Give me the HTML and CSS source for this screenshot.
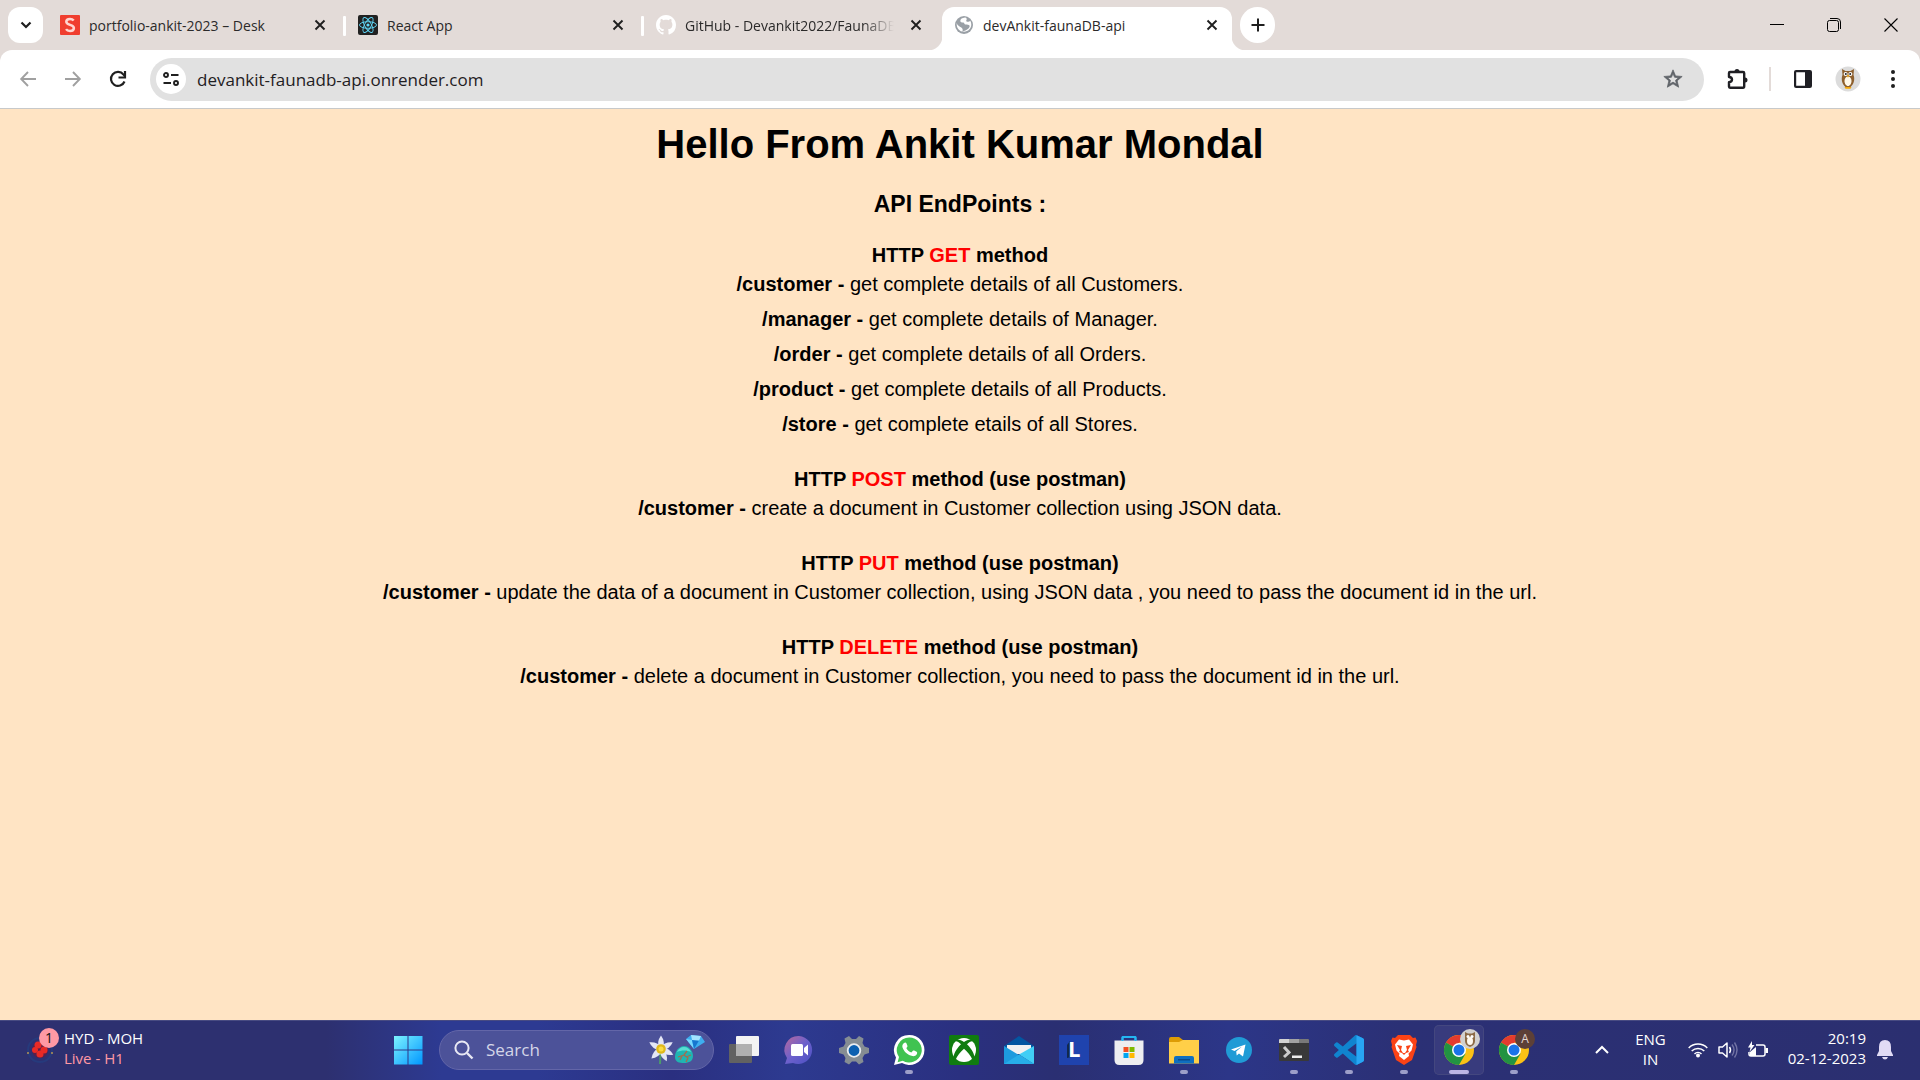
FILE: index.html
```html
<!DOCTYPE html>
<html lang="en">
<head>
<meta charset="utf-8">
<title>devAnkit-faunaDB-api</title>
<link rel="stylesheet" href="styles.css">
</head>
<body>
<header class="tabstrip">
  <button class="tab-search" aria-label="Search tabs"><svg width="12" height="12" viewBox="0 0 12 12"><path d="M1.500 3.500 6 8l4.500-4.500" fill="none" stroke="#1f1f1f" stroke-width="2.200"/></svg></button>
  <div class="tab divided">
    <svg class="favicon" viewBox="0 0 20 20"><rect width="20" height="20" rx="1" fill="#f03e2f"/><path d="M13.700 5.500C12.700 4.300 11.400 4 10 4 7.800 4 6.300 5 6.300 6.800c0 3.800 7.600 2.400 7.600 6.200 0 1.900-1.700 3-3.900 3-1.700 0-3.100-.6-4-1.900" fill="none" stroke="#ffd5d0" stroke-width="2.500"/></svg>
    <span class="tab-title">portfolio-ankit-2023 – Desk</span>
    <button class="tab-close" aria-label="Close tab"><svg width="12" height="12" viewBox="0 0 12 12"><path d="m1.500 1.500 9 9m0-9-9 9" stroke="#1f1f1f" stroke-width="1.900"/></svg></button>
  </div>
  <div class="tab divided">
    <svg class="favicon" viewBox="0 0 20 20"><rect width="20" height="20" rx="2" fill="#212121"/><g fill="none" stroke="#61dafb" stroke-width=".9"><ellipse cx="10" cy="10" rx="8.500" ry="3.300"/><ellipse cx="10" cy="10" rx="8.500" ry="3.300" transform="rotate(60 10 10)"/><ellipse cx="10" cy="10" rx="8.500" ry="3.300" transform="rotate(120 10 10)"/></g><circle cx="10" cy="10" r="1.600" fill="#61dafb"/></svg>
    <span class="tab-title">React App</span>
    <button class="tab-close" aria-label="Close tab"><svg width="12" height="12" viewBox="0 0 12 12"><path d="m1.500 1.500 9 9m0-9-9 9" stroke="#1f1f1f" stroke-width="1.900"/></svg></button>
  </div>
  <div class="tab">
    <svg class="favicon" viewBox="0 0 16 16"><path fill="#fff" d="M8 0C3.580 0 0 3.580 0 8c0 3.540 2.290 6.530 5.470 7.590.4.070.55-.17.55-.38 0-.19-.01-.82-.01-1.490-2.010.37-2.530-.49-2.690-.94-.09-.23-.48-.94-.82-1.130-.28-.15-.68-.52-.01-.53.63-.01 1.080.58 1.230.82.72 1.210 1.870.87 2.330.66.070-.52.28-.87.51-1.070-1.780-.2-3.640-.89-3.640-3.950 0-.87.31-1.590.82-2.150-.08-.2-.36-1.020.08-2.120 0 0 .67-.21 2.200.82.64-.18 1.320-.27 2-.27s1.360.09 2 .27c1.530-1.040 2.200-.82 2.200-.82.44 1.100.16 1.920.08 2.120.51.56.82 1.270.82 2.150 0 3.070-1.870 3.750-3.650 3.950.29.25.54.73.54 1.480 0 1.070-.01 1.930-.01 2.200 0 .21.15.46.55.38A8.010 8.010 0 0 0 16 8c0-4.420-3.580-8-8-8z"/></svg>
    <span class="tab-title faded">GitHub - Devankit2022/FaunaDB</span>
    <button class="tab-close" aria-label="Close tab"><svg width="12" height="12" viewBox="0 0 12 12"><path d="m1.500 1.500 9 9m0-9-9 9" stroke="#1f1f1f" stroke-width="1.900"/></svg></button>
  </div>
  <div class="tab active">
    <svg class="favicon" viewBox="0 0 20 20"><circle cx="10" cy="10" r="9" fill="#9aa0a6"/><path d="M11 2.600c-3 .4-4.500 1.500-4.700 3.100 0 1.500 1.500 1.700 2.900 1.700 1.200 0 1 1.900 2.300 2 1.800.2 3.300 0 4 1 .5 1-.3 2.500-1.700 3.600-1.300 1-3.300 2.200-5.300 2.400.5-2.200 0-3-1.200-3.900-1.800-1.200-3.900-1.900-4.600-4.500-.5 5 2.800 8.800 7.300 8.800 4.200 0 7.300-3.300 7.300-7.200 0-1.400-.4-2.700-1-3.800-1 .9-2.700 1.500-3.700.7-1-.9.300-1.700.1-2.600-.1-.6-.7-.9-1.400-1.300z" fill="#fff"/></svg>
    <span class="tab-title">devAnkit-faunaDB-api</span>
    <button class="tab-close" aria-label="Close tab"><svg width="12" height="12" viewBox="0 0 12 12"><path d="m1.500 1.500 9 9m0-9-9 9" stroke="#1f1f1f" stroke-width="1.900"/></svg></button>
  </div>
  <button class="new-tab" aria-label="New tab"><svg width="14" height="14" viewBox="0 0 14 14"><path d="M7 .5v13M.5 7h13" stroke="#1f1f1f" stroke-width="2"/></svg></button>
  <div class="window-controls">
    <button aria-label="Minimize"><svg width="14" height="14" viewBox="0 0 14 14"><path d="M0 6.500h14" stroke="#000"/></svg></button>
    <button aria-label="Restore"><svg width="14" height="14" viewBox="0 0 14 14"><g fill="none" stroke="#000"><rect x=".5" y="2.500" width="11" height="11" rx="2"/><path d="M3 .5h7a3.500 3.500 0 0 1 3.500 3.500v7"/></g></svg></button>
    <button aria-label="Close"><svg width="14" height="14" viewBox="0 0 14 14"><path d="m.5.5 13 13m0-13-13 13" stroke="#000" stroke-width="1.100"/></svg></button>
  </div>
</header>

<div class="toolbar-back">
<nav class="toolbar">
  <button class="tool" aria-label="Back"><svg width="16" height="16" viewBox="0 0 16 16"><path d="M16 8H1.500M8 1 1.200 8 8 15" fill="none" stroke="#a0a0a0" stroke-width="1.900"/></svg></button>
  <button class="tool" aria-label="Forward"><svg width="16" height="16" viewBox="0 0 16 16"><path d="M0 8h14.500M8 1l6.800 7L8 15" fill="none" stroke="#a0a0a0" stroke-width="1.900"/></svg></button>
  <button class="tool" aria-label="Reload"><svg width="18" height="18" viewBox="0 0 18 18"><path d="M15.500 11.500A7 7 0 1 1 14.500 4.600L16 6.200" fill="none" stroke="#1f1f1f" stroke-width="2.200"/><path d="M16 1v6.500H9.500" fill="none" stroke="#1f1f1f" stroke-width="2.200"/></svg></button>
  <div class="omnibox">
    <button class="site-info" aria-label="Site information"><svg width="16" height="14" viewBox="0 0 16 14"><g fill="none" stroke="#1f1f1f" stroke-width="1.900"><circle cx="3" cy="3" r="2"/><path d="M8 3h7.500M.5 11H8"/><circle cx="13" cy="11" r="2"/></g></svg></button>
    <input class="url" type="text" aria-label="Address" value="devankit-faunadb-api.onrender.com">
    <button class="star" aria-label="Bookmark"><svg width="22" height="22" viewBox="0 0 24 24"><path fill="#5f6368" d="m22 9.240-7.190-.62L12 2 9.190 8.630 2 9.240l5.460 4.730L5.820 21 12 17.270 18.180 21l-1.630-7.030L22 9.240zM12 15.400l-3.760 2.270 1-4.280-3.320-2.880 4.380-.38L12 6.100l1.710 4.040 4.380.38-3.320 2.880 1 4.280L12 15.400z" stroke="#5f6368" stroke-width=".8"/></svg></button>
  </div>
  <div class="actions">
    <button class="tool" aria-label="Extensions"><svg width="22" height="22" viewBox="0 0 22 22"><path d="M4 4h12q1.200 0 1.200 1.200v13Q17.200 19.700 16 19.700H3Q2 19.700 2 18.500v-4.200q3-.3 3-2.700T2 9V5q0-1 1-1z" fill="none" stroke="#1f1f24" stroke-width="2.400" stroke-linejoin="round"/><path d="M7.500 3.500a2.500 2.500 0 0 1 5 0zM18 9.500a2.500 2.500 0 0 1 0 5z" fill="#1f1f24"/></svg></button>
    <span class="bar-divider"></span>
    <button class="tool" aria-label="Side panel"><svg width="18" height="18" viewBox="0 0 18 18"><rect x="1.100" y="1.100" width="15.800" height="15.800" rx="1" fill="none" stroke="#1f1f24" stroke-width="2.200"/><path d="M11 1h6v16h-6z" fill="#1f1f24"/></svg></button>
    <button class="tool" aria-label="Profile"><svg width="26" height="26" viewBox="0 0 26 26"><circle cx="13" cy="13" r="12.500" fill="#dcdcdc"/><path d="M7 3l3.500 2h5L19 3l-.5 6c2 5-.5 10-3 12h-5c-2.500-2-5-7-3-12z" fill="#8d5f2d"/><path d="M13 10.500c2 0 3.500 2 3.500 4.500s-1.500 5-3.500 5-3.500-2.500-3.500-5 1.500-4.500 3.500-4.500z" fill="#fff8e9"/><circle cx="10.600" cy="8" r="2" fill="#fff"/><circle cx="15.400" cy="8" r="2" fill="#fff"/><circle cx="10.800" cy="8" r="1" fill="#222"/><circle cx="15.200" cy="8" r="1" fill="#222"/><path d="m12 9 1 3 1-3zM9.500 21h7l-1 1.700h-5z" fill="#f5a90a"/></svg></button>
    <button class="tool" aria-label="Menu"><svg width="6" height="18" viewBox="0 0 6 18"><g fill="#1f1f1f"><circle cx="3" cy="2" r="2"/><circle cx="3" cy="9" r="2"/><circle cx="3" cy="16" r="2"/></g></svg></button>
  </div>
</nav>
</div>

<main class="page">
  <h1>Hello From Ankit Kumar Mondal</h1>
  <h2>API EndPoints :</h2>
  <section>
    <h3>HTTP <span class="verb">GET</span> method</h3>
    <p><b>/customer - </b>get complete details of all Customers.</p>
    <p><b>/manager - </b>get complete details of Manager.</p>
    <p><b>/order - </b>get complete details of all Orders.</p>
    <p><b>/product - </b>get complete details of all Products.</p>
    <p><b>/store - </b>get complete etails of all Stores.</p>
  </section>
  <section>
    <h3>HTTP <span class="verb">POST</span> method (use postman)</h3>
    <p><b>/customer - </b>create a document in Customer collection using JSON data.</p>
  </section>
  <section>
    <h3>HTTP <span class="verb">PUT</span> method (use postman)</h3>
    <p><b>/customer - </b>update the data of a document in Customer collection, using JSON data , you need to pass the document id in the url.</p>
  </section>
  <section>
    <h3>HTTP <span class="verb">DELETE</span> method (use postman)</h3>
    <p><b>/customer - </b>delete a document in Customer collection, you need to pass the document id in the url.</p>
  </section>
</main>

<footer class="taskbar">
  <button class="widget">
    <svg width="34" height="44" viewBox="0 0 34 44"><circle cx="14" cy="22" r="12" fill="none" stroke="#263a7c" stroke-width="2"/><circle cx="14" cy="22" r="8" fill="#59204a"/><g fill="#e82a26"><circle cx="12" cy="17" r="3.500"/><circle cx="18" cy="22" r="3.500"/><circle cx="9" cy="22" r="3"/><circle cx="14" cy="26" r="3.500"/></g><circle cx="2" cy="25" r="1" fill="#b59553"/><circle cx="26" cy="25" r="1" fill="#b59553"/><circle cx="23" cy="10" r="10" fill="#ff99a4"/><text x="23" y="15" text-anchor="middle" font-size="14" fill="#111">1</text></svg>
    <span class="score"><span>HYD - MOH</span><span class="live">Live - H1</span></span>
  </button>

  <div class="apps">
    <button class="app" aria-label="Start"><svg width="30" height="30" viewBox="0 0 30 30"><defs><linearGradient id="win" x1="0" y1="0" x2="1" y2="1" ><stop stop-color="#7df3ff"/><stop offset="1" stop-color="#0096ff"/></linearGradient></defs><path d="M1 1h13.500v13.500H1zM15.500 1H29.500v13.500H15.500zM1 15.500h13.500V29.500H1zM15.500 15.500H29.500V29.500H15.500z" fill="url(#win)"/></svg></button>
    <label class="search">
      <svg width="20" height="20" viewBox="0 0 20 20"><circle cx="8" cy="8" r="6.600" fill="none" stroke="#e8e8f4" stroke-width="2"/><path d="m13 13 5.500 5.500" stroke="#e8e8f4" stroke-width="2.400"/></svg>
      <input type="text" placeholder="Search" aria-label="Search">
      <svg width="58" height="32" viewBox="0 0 58 32"><path d="M12 17c1 5 0 9 0 13" stroke="#4c9a6b" stroke-width="2" fill="none"/><g fill="#e3e6f6"><path id="petal" d="M13 1.500q4.500 6 2 13.500h-4q-2.500-7.500 2-13.500z"/><use href="#petal" transform="rotate(60 13 15)"/><use href="#petal" transform="rotate(115 13 15)"/><use href="#petal" transform="rotate(155 13 15)"/><use href="#petal" transform="rotate(225 13 15)"/><use href="#petal" transform="rotate(300 13 15)"/></g><circle cx="13" cy="15" r="4.800" fill="#e0b81b"/><circle cx="13" cy="15" r="2.500" fill="#f9dc43"/><path d="M27 23c0-6 4-11 9-11s9 5 9 10-4 7-9 7-9-1-9-6z" fill="#20b5b2"/><path d="M29 18c1-3 4-5 7-5s6 2 7 5c-5-2-9-2-14 0z" fill="#58ddd3"/><path d="m30 23 6-2 3-4m-3 4 4 3-2 4m-4-6-2 4m6-3 5-2" stroke="#a66b4d" stroke-width="1.300" fill="none"/><path d="m38 5 5-4 10 1 4 6-11 7z" fill="#3eaef0"/><path d="m38 5 6 1 2 9z" fill="#78d8ff"/><path d="m44 6 7 .5L46 15z" fill="#1776cf"/><path d="m43 1 10 1-2 4.500L44 6z" fill="#a3e4ff"/></svg>
    </label>
    <button class="app" aria-label="Task view"><svg width="30" height="30" viewBox="0 0 30 30"><rect y="9" width="23" height="19" rx="1" fill="#626262"/><rect x="7" y="1" width="23" height="20" rx="1" fill="#f3f3f3"/><path d="M7 9h16v12H7z" fill="#b0b0b0"/></svg></button>
    <button class="app" aria-label="Chat"><svg width="30" height="30" viewBox="0 0 30 30"><defs><linearGradient id="chat" x1="0" y1="0" x2="1" y2="1"><stop stop-color="#b8689b"/><stop offset=".5" stop-color="#6d61cc"/><stop offset="1" stop-color="#4a4fc3"/></linearGradient></defs><path d="M15 1a14 14 0 1 1-6 27L1 29l2-6A14 14 0 0 1 15 1z" fill="url(#chat)"/><rect x="7" y="9" width="12" height="12" rx="1.500" fill="#fff"/><path d="m20 13 4-3.500v11L20 17z" fill="#fff"/></svg></button>
    <button class="app" aria-label="Settings"><svg width="30" height="30" viewBox="0 0 30 30"><path d="M10 1l3 3h4l3-3 4.500 2.500-1 4.500 2 3.500L30 13v5l-4.500 1.500-2 3.500 1 4-4.500 2.500-3-3h-4l-3 3L5.500 27l1-4-2-3.500L0 18v-5l4.500-1.500 2-3.500-1-4.500z" fill="#858d93"/><circle cx="15" cy="15.500" r="6.300" fill="#0b60b1" stroke="#e9edf1" stroke-width="1.800"/></svg></button>
    <button class="app open" aria-label="WhatsApp"><svg width="30" height="30" viewBox="0 0 30 30"><path d="M15 0a15 15 0 1 1-7 28L0 30l2-7.500A15 15 0 0 1 15 0z" fill="#fff"/><path d="M15.300 2.500a12.500 12.500 0 1 1-6.500 23.200l-5.200 1.500L5 22A12.500 12.500 0 0 1 15.300 2.500z" fill="#40c351"/><path d="M10 8c1-.8 2-.7 2.400.2l1 2.500c.3.8-.2 1.300-1.100 2.300 1 2.200 2.700 3.700 5 4.600l1.600-1.800c.4-.4.8-.4 1.300-.2l2.400 1.200c.8.4.6 1.500.2 2.400-.7 1.500-2.800 2.200-4.400 1.900-4.700-1-8.300-4-9.900-8.500-.5-1.700 0-3.600 1.500-4.600z" fill="#fff"/></svg></button>
    <button class="app" aria-label="Xbox"><svg width="30" height="30" viewBox="0 0 30 30"><rect width="30" height="30" rx="2" fill="#107c10"/><circle cx="15" cy="15" r="12" fill="#fff"/><path d="M7 4.500c3-.5 5.500.6 8 2.500 2.500-1.900 5-3 8-2.500l1.500 2c-2-.7-4 .2-6.500 2.700 5 5 7.500 10 7.500 13.800l-2 2C22 21 18.500 16.500 15 13.700 11.500 16.500 8 21 6.500 25l-2-2c0-3.800 2.500-8.800 7.500-13.800C9.500 6.700 7.500 5.800 5.500 6.500z" fill="#107c10"/></svg></button>
    <button class="app" aria-label="Mail"><svg width="30" height="30" viewBox="0 0 30 30"><path d="M0 11 15 1l15 10v4H0z" fill="#0356a1"/><path d="M3 10h24v9H3z" fill="#f1f1f1"/><path d="M0 11v18h30z" fill="#1d9bde"/><path d="M30 11v18L15 19.500z" fill="#41cef5"/><path d="M0 29 15 19.500 30 29z" fill="#27aee9"/></svg></button>
    <button class="app" aria-label="L"><svg width="30" height="30" viewBox="0 0 30 30"><path d="M0 0h30v30H0z" fill="#1f43ae"/><path d="m11 6-3 4v13l4-1z" fill="#12294d"/><text x="9" y="22" font-size="22" font-weight="700" fill="#fff">L</text></svg></button>
    <button class="app" aria-label="Microsoft Store"><svg width="30" height="30" viewBox="0 0 30 30"><path d="M8.500 8V2.500Q8.500 2 9 2h12q.5 0 .5.500V8" fill="none" stroke="#24b5f2" stroke-width="2"/><path d="M.5 5.500h29V25q0 5-5 5h-19q-5 0-5-5z" fill="#eeeef0"/><path d="M9.500 12h5v5h-5z" fill="#f25022"/><path d="M15.500 12h5v5h-5z" fill="#7fba00"/><path d="M9.500 18h5v5h-5z" fill="#00a4ef"/><path d="M15.500 18h5v5h-5z" fill="#ffb900"/><path d="M8.500 6V2.500Q8.500 2 9 2h12q.5 0 .5.500V6" fill="none" stroke="#24b5f2" stroke-width="2"/></svg></button>
    <button class="app open" aria-label="File Explorer"><svg width="30" height="30" viewBox="0 0 30 30"><path d="M0 4q0-2 2-2h8l4 3h14q2 0 2 2v10H0z" fill="#dd9c05"/><path d="M0 7h10l4-2h16v23.500H0z" fill="#ffcf48"/><path d="M5 28.500V23q0-2 2-2h16q2 0 2 2v5.500z" fill="#0f6fc0"/><path d="M9 24h12v1.500H9z" fill="#0a4a8c"/></svg></button>
    <button class="app" aria-label="Telegram"><svg width="26" height="26" viewBox="0 0 26 26"><circle cx="13" cy="13" r="13" fill="#209bd6"/><path d="m5 12.500 14.500-5-2.500 12-4-3-2.300 2-.5-4L16 9.500 8.500 14z" fill="#fff"/></svg></button>
    <button class="app open" aria-label="Terminal"><svg width="30" height="30" viewBox="0 0 30 30"><rect y="4" width="30" height="22" rx="1" fill="#393939"/><path d="M0 5q0-1 1-1h9v4H0z" fill="#d2d2d2"/><path d="M10 4h10v4H10z" fill="#a2a2a2"/><path d="M20 4h9q1 0 1 1v3H20z" fill="#797979"/><path d="m5 12 5 5.500L5 22" fill="none" stroke="#ccc" stroke-width="3"/><path d="M13 20.500h10V23H13z" fill="#eee"/></svg></button>
    <button class="app open" aria-label="Visual Studio Code"><svg width="30" height="30" viewBox="0 0 24 24"><path fill="#1084cf" d="M23.150 2.587L18.210.21a1.494 1.494 0 0 0-1.705.29l-9.460 8.630-4.120-3.128a.999.999 0 0 0-1.276.057L.327 7.261A1 1 0 0 0 .326 8.740L3.899 12 .326 15.260a1 1 0 0 0 .001 1.479L1.650 17.940a.999.999 0 0 0 1.276.057l4.120-3.128 9.460 8.630a1.492 1.492 0 0 0 1.704.29l4.942-2.377A1.500 1.500 0 0 0 24 20.060V3.939a1.500 1.500 0 0 0-.85-1.352zm-5.146 14.861L10.826 12l7.178-5.448v10.896z"/><path d="m18 .1 5.150 2.490a1.500 1.500 0 0 1 .85 1.350v16.120a1.500 1.500 0 0 1-.85 1.350L18 23.900z" fill="#28a5f3"/></svg></button>
    <button class="app open" aria-label="Brave"><svg width="30" height="30" viewBox="0 0 30 30"><path d="M9 0h12l3 3 2.500-.5L28 6l-1 4 .5 2-4.500 13-8 5-8-5L2.500 12l.5-2-1-4 1.500-3.500L6 3z" fill="#fb4316"/><path d="M15 5.500 20 4.500l4 5-1.500 6-3 3 .5 2.500-5 4-5-4 .5-2.500-3-3L6 9.500l4-5z" fill="#fff"/><path d="m8 10 5 1-1 4 2 3h2l2-3-1-4 5-1-3 5 1 2-3 1-2 2-2-2-3-1 1-2z" fill="#fb4316"/></svg></button>
    <button class="app open current" aria-label="Chrome"><svg width="42" height="42" viewBox="-6 0 42 42"><g id="chrome"><circle cx="15" cy="21" r="15" fill="#fbc116"/><path d="M15 21 2 13.500A15 15 0 0 1 28 13.500H15z" fill="#e33b2e"/><path d="M2 13.500A15 15 0 0 0 15 36l6.500-11.300L15 21z" fill="#229342"/><circle cx="15" cy="21" r="7" fill="#fff"/><circle cx="15" cy="21" r="5.500" fill="#1a73e8"/></g><circle cx="26" cy="10" r="10" fill="#d2d0ce"/><path d="m21 3 3 1.500h4L31 3v9c0 3-2 5-5 6-3-1-5-3-5-6z" fill="#8c6a45"/><ellipse cx="26" cy="12" rx="3" ry="4" fill="#fff8ed"/><circle cx="24" cy="7.500" r="1.500" fill="#fff"/><circle cx="28" cy="7.500" r="1.500" fill="#fff"/></svg></button>
    <button class="app open" aria-label="Chrome, second profile"><svg width="42" height="42" viewBox="-6 0 42 42"><use href="#chrome"/><circle cx="26" cy="10" r="10" fill="#5d4037"/><text x="26" y="14" text-anchor="middle" font-size="12" fill="#e3d9d5">A</text></svg></button>
  </div>

  <div class="tray">
    <button aria-label="Hidden icons"><svg width="16" height="10" viewBox="0 0 16 10"><path d="m2 8 6-6 6 6" fill="none" stroke="#fff" stroke-width="2"/></svg></button>
    <button class="lang"><span>ENG</span><span>IN</span></button>
    <button class="status" aria-label="Network, volume, battery">
      <svg width="20" height="16" viewBox="0 0 20 16"><g fill="none" stroke="#fff" stroke-width="1.500"><path d="M.7 6a13 13 0 0 1 18.600 0M3.700 9a9 9 0 0 1 12.600 0M6.500 12a5 5 0 0 1 7 0"/></g><circle cx="10" cy="13.500" r="2" fill="#fff"/></svg>
      <svg width="20" height="18" viewBox="0 0 20 18"><path d="M1 6h3.500L9 2v14l-4.500-4H1z" fill="none" stroke="#fff" stroke-width="1.500" stroke-linejoin="round"/><path d="M11.500 6q2 3 0 6" fill="none" stroke="#fff" stroke-width="1.500"/><path d="M14 3.500q4 5.500 0 11M16.500 1.500q5 7.500 0 15" fill="none" stroke="#7273a4" stroke-width="1.400"/></svg>
      <svg width="20" height="18" viewBox="0 0 20 18"><path d="M8 4h7q2 0 2 2v7q0 2-2 2H3q-2 0-2-2v-2" fill="none" stroke="#fff" stroke-width="1.500"/><path d="M17.500 7H20v5h-2.500zM2 15v-4l6-5v9zM4 0 0 6.500h2.500L1.500 11 6.500 4H4z" fill="#fff"/></svg>
    </button>
    <button class="clock"><span>20:19</span><span>02-12-2023</span></button>
    <button aria-label="Notifications"><svg width="16" height="20" viewBox="0 0 16 20"><path d="M8 0q6 0 6 7v4l2 4v1H0v-1l2-4V7q0-7 6-7zM5 17h6q-1 2.500-3 2.500T5 17z" fill="#e1dbf5"/></svg></button>
  </div>
</footer>
</body>
</html>
```
FILE: styles.css
```css
* { box-sizing: border-box; }

body {
  margin: 0;
  min-height: 100vh;
  display: flex;
  flex-direction: column;
  background: #ffe4c4;
  font-family: "Open Sans", "Noto Sans", sans-serif;
}

button {
  display: flex;
  align-items: center;
  justify-content: center;
  flex: none;
  padding: 0;
  border: 0;
  background: none;
  color: inherit;
  font: inherit;
}

svg { display: block; flex: none; overflow: visible; }

input {
  min-width: 0;
  padding: 0;
  border: 0;
  outline: 0;
  background: none;
  font: inherit;
}

/* Tab strip */
.tabstrip {
  display: flex;
  height: 50px;
  padding: 7px 1px 0 8px;
  background: #e3dbd8;
}

.tab-search, .new-tab {
  width: 35px;
  height: 36px;
  background: #fff;
}
.tab-search { margin-right: 5px; border-radius: 12px; }
.new-tab { margin-left: 8px; border-radius: 18px; }

.tab {
  position: relative;
  display: flex;
  align-items: center;
  flex: 0 1 298px;
  min-width: 0;
  height: 43px;
  padding: 0 17px 7px 12px;
  color: #2b2a2a;
  font-size: 14px;
}
.divided::after {
  content: "";
  position: absolute;
  right: 0;
  top: 9px;
  width: 3px;
  height: 20px;
  border-radius: 1px;
  background: #fff;
}
.tab.active {
  flex-basis: 290px;
  padding-right: 11px;
  border-radius: 12px 12px 0 0;
  background: #fff;
}
.active::before, .active::after {
  content: "";
  position: absolute;
  bottom: 0;
  width: 14px;
  height: 14px;
}
.active::before { right: 100%; background: radial-gradient(circle at 0 0, transparent 14px, #fff 15px); }
.active::after { left: 100%; background: radial-gradient(circle at 100% 0, transparent 14px, #fff 15px); }

.favicon { width: 20px; height: 20px; }
.tab-title {
  flex: 1;
  margin: 0 13px 0 9px;
  overflow: hidden;
  white-space: nowrap;
}
.faded { -webkit-mask-image: linear-gradient(90deg, #000 85%, transparent); mask-image: linear-gradient(90deg, #000 85%, transparent); }
.tab-close { width: 18px; height: 18px; }

.window-controls { display: flex; margin-left: auto; }
.window-controls button { width: 57px; height: 36px; }

/* Toolbar */
.toolbar-back { background: #e3dbd8; }
.toolbar {
  display: flex;
  align-items: center;
  height: 59px;
  padding: 0 5px;
  border-bottom: 1px solid #c7c9ca;
  border-radius: 12px 12px 0 0;
  background: #fff;
}
.tool { width: 45px; height: 36px; }
.omnibox {
  display: flex;
  align-items: center;
  flex: 1;
  height: 43px;
  margin-left: 10px;
  padding: 0 20px 0 6px;
  border-radius: 22px;
  background: #e1e1e1;
}
.site-info {
  width: 30px;
  height: 30px;
  border-radius: 15px;
  background: #fff;
}
.url {
  flex: 1;
  margin-left: 11px;
  color: #1f2023;
  font-size: 17px;
}
.actions { display: flex; align-items: center; margin-left: 11px; }
.bar-divider { width: 2px; height: 24px; margin: 0 9px; background: #e3dbd8; }

/* Page */
.page {
  flex: 1;
  padding: 11px 16px;
  color: #000;
  font-family: "Liberation Sans", Arial, sans-serif;
  font-size: 20px;
  line-height: 29px;
  text-align: center;
}
.page h1 { margin: 0 0 22px; font-size: 40px; line-height: 48px; }
.page h2 { margin: 0 0 22px; font-size: 23px; line-height: 29px; }
.page h3 { margin: 0; font-size: 20px; }
.page section { margin-bottom: 26px; }
.page p { margin: 0 0 6px; }
.page p:last-child { margin-bottom: 0; }
.verb { color: #f00; }

/* Taskbar */
.taskbar {
  display: grid;
  grid-template-columns: 1fr auto 1fr;
  align-items: center;
  height: 60px;
  padding-bottom: 1px;
  border-top: 1px solid #484b82;
  background: linear-gradient(90deg, #2d3070 0%, #2d3070 17%, #2d3a92 23%, #2d3a92 28%, #2a2f80 35%, #2d3a90 41%, #2a3080 50%, #2a2f72 55%, #2c3688 64%, #2b3075 73%, #2b2f70 100%);
  color: #fff;
  font-size: 15px;
  line-height: 20px;
}
.widget { justify-self: start; margin-left: 26px; gap: 4px; }
.score { display: flex; flex-direction: column; padding-bottom: 4px; text-align: left; }
.live { color: #ff99a4; }

.apps { display: flex; align-items: center; gap: 5px; padding-left: 2px; }
.app {
  position: relative;
  width: 50px;
  height: 50px;
  border-radius: 5px;
}
.open::after {
  content: "";
  position: absolute;
  bottom: 1px;
  width: 8px;
  height: 4px;
  border-radius: 2px;
  background: #9d9fc9;
}
.current { background: #383b7d; box-shadow: inset 0 0 0 1px #44477f; }
.current::after { width: 20px; background: #bcb6e6; }

.search {
  display: flex;
  align-items: center;
  width: 275px;
  height: 40px;
  margin-left: 1px;
  padding: 0 7px 0 14px;
  border: 1px solid #6366a8;
  border-radius: 20px;
  background: #4c5299;
  font-size: 17px;
}
.search input { flex: 1; margin-left: 12px; color: #fff; }
.search input::placeholder { color: #d5d6e8; opacity: 1; }

.tray { display: flex; align-items: center; justify-self: end; margin-right: 27px; }
.lang { flex-direction: column; margin-left: 25px; padding-bottom: 2px; }
.status { gap: 10px; margin-left: 22px; }
.clock { flex-direction: column; align-items: flex-end; margin: 0 11px 0 20px; padding-bottom: 4px; }
```
